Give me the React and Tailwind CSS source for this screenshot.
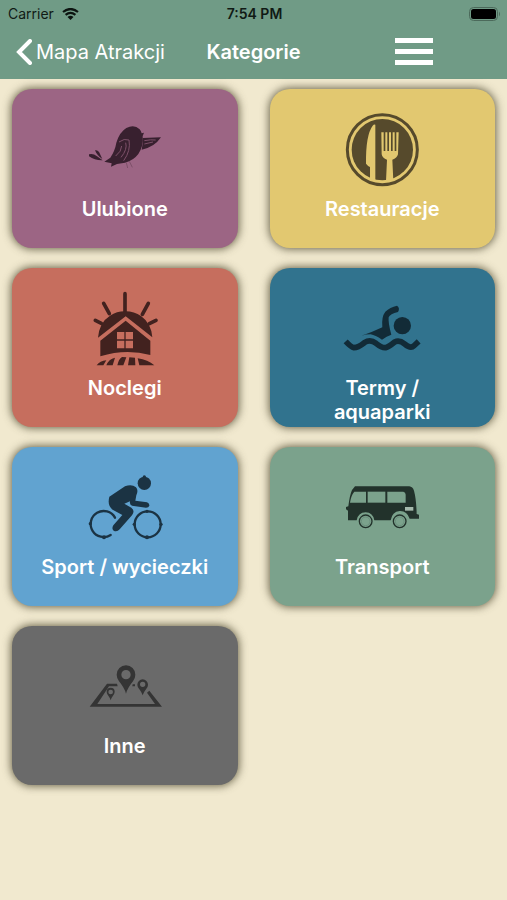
import React from "react";

function BirdIcon() {
  return (
    <svg viewBox="0 -9 300 270" className="h-[90px] w-[100px]" aria-hidden="true">
      <g fill="#38202f">
        <path d="M88 155 L106 143 Q120 122 124 98 Q134 66 154 54 Q178 42 194 58 Q199 64 200 70 L207 68 L203 78 Q206 108 190 132 Q176 151 150 158 L126 162 L108 170 L110 160 Z" />
        <path d="M203 84 L258 82 Q238 112 200 119 Q204 100 203 84 Z" />
        <path d="M42 133 Q54 129 66 139 L83 151 Q60 152 42 139 Z" />
        <path d="M60 121 Q70 119 75 132 L82 147 Q66 137 60 121 Z" />
      </g>
      <g fill="none" stroke="#7d5069" strokeWidth="3">
        <path d="M132 96 Q148 84 162 90 Q168 122 146 152" />
        <path d="M152 98 Q158 118 138 142" />
        <path d="M140 108 Q140 124 122 138" />
        <path d="M208 92 Q228 88 242 90 M208 102 L234 96" />
        <path d="M154 158 L158 174 M163 154 L172 172" />
      </g>
    </svg>
  );
}

function RestaurantIcon() {
  return (
    <svg viewBox="0 6 300 270" className="h-[90px] w-[100px]" aria-hidden="true">
      <circle cx="151" cy="134" r="105" fill="none" stroke="#564a2c" strokeWidth="9" />
      <circle cx="151" cy="134" r="92" fill="#564a2c" />
      <g fill="#e2c870">
        <path d="M130 59 V228 H114 V186 Q108 184 102 176 Q101 90 122 62 Q126 57 130 59 Z" />
        <path d="M148 82 H155 V138 H160 V82 H166 V138 H171 V82 H177 V138 H182 V82 H188 V138 H193 V82 H200 L198 148 Q195 160 181 164 L184 228 H162 L165 164 Q151 160 149 148 Z" />
      </g>
    </svg>
  );
}

function LodgingIcon() {
  return (
    <svg viewBox="-15 3 300 270" className="h-[90px] w-[100px]" aria-hidden="true">
      <g stroke="#42221f" strokeWidth="11" strokeLinecap="round">
        <path d="M135 26 V80 M71 55 L88 86 M205 55 L187 88 M46 106 L64 115 M228 106 L208 116" />
      </g>
      <g fill="#42221f">
        <path d="M54 158 Q58 112 90 92 Q112 78 137 79 Q162 79 184 94 Q214 116 217 157 L137 94 Z" />
        <path d="M61 167 L137 107 L211 167 V210 Q137 190 61 214 Z" />
        <path d="M50 241 Q60 228 79 226 L70 241 Z M79 241 Q86 222 105 218 L98 241 Z M112 241 Q116 222 126 216 L139 217 L130 241 Z M144 241 L148 217 L165 218 L166 241 Z M178 241 L173 220 Q204 225 223 241 Z" />
      </g>
      <path d="M111 141 H133 V163 H111 Z M137 141 H159 V163 H137 Z M111 167 H133 V190 H111 Z M137 167 H159 V190 H137 Z" fill="#c66e5e" />
    </svg>
  );
}

function SwimmerIcon() {
  return (
    <svg viewBox="0 -12 300 270" className="h-[90px] w-[100px]" aria-hidden="true">
      <circle cx="211" cy="107" r="26" fill="#122b37" />
      <path d="M88 137 Q118 128 151 112 Q148 80 160 65 Q174 52 195 47 Q205 54 198 66 Q174 72 170 82 Q168 98 178 134 Q164 138 150 149 Q130 136 116 133 Q102 133 88 137 Z" fill="#122b37" />
      <path d="M41 154 Q57 171 66 173 Q78 173 97 158 Q115 147 132 160 Q149 174 161 173 Q170 171 188 156 Q202 149 218 162 Q236 177 246 167 L260 154" fill="none" stroke="#122b37" strokeWidth="17" />
    </svg>
  );
}

function CyclistIcon() {
  return (
    <svg viewBox="0 0 300 270" className="h-[90px] w-[100px]" aria-hidden="true">
      <g fill="none" stroke="#1b3343" strokeWidth="7">
        <path d="M120 158 A39 39 0 1 0 107 210" strokeLinecap="round" />
        <circle cx="218" cy="178" r="39" />
      </g>
      <g fill="#1b3343">
        <circle cx="208" cy="55" r="20" />
        <circle cx="208" cy="36" r="5" />
        <circle cx="46" cy="176" r="5" />
        <circle cx="87" cy="217" r="6" />
        <circle cx="216" cy="217" r="6" />
        <circle cx="258" cy="178" r="5" />
        <circle cx="178" cy="178" r="5" />
        <circle cx="216" cy="139" r="5" />
        <path d="M103 95 L150 64 Q170 56 183 67 Q191 76 184 91 L181 107 L216 112 Q224 115 223 122 Q221 128 213 128 L171 122 Q163 119 165 109 L148 116 L169 128 Q181 138 171 151 L134 193 Q126 202 116 197 Q109 191 115 181 L142 150 L113 134 Q96 122 103 95 Z" />
      </g>
    </svg>
  );
}

function BusIcon() {
  return (
    <svg viewBox="0 -15 300 270" className="h-[90px] w-[100px]" aria-hidden="true">
      <path d="M69 49 H232 Q242 50 246 62 Q253 88 254 132 L261 134 V146 H233 Q225 122 203 123 Q180 125 176 151 H127 Q123 128 101 127 Q78 128 74 151 H48 V122 L42 118 V111 L49 109 Q53 76 60 60 Z" fill="#22322b" />
      <g fill="#7ba28c">
        <path d="M67 65 H102 V98 H54 Q57 76 67 65 Z" />
        <path d="M107 65 H160 V98 H107 Z" />
        <path d="M166 65 H214 Q221 66 221 74 V98 H166 Z" />
      </g>
      <path d="M219 111 H244 V122 H219 Z" fill="#a5b9ac" />
      <g fill="#7ba28c" stroke="#22322b" strokeWidth="4">
        <circle cx="101" cy="154" r="19" />
        <circle cx="203" cy="154" r="19" />
      </g>
      <g fill="none" stroke="#648775" strokeWidth="2">
        <circle cx="101" cy="154" r="13" />
        <circle cx="203" cy="154" r="13" />
      </g>
    </svg>
  );
}

function MapPinsIcon() {
  return (
    <svg viewBox="0 -18 300 270" className="h-[90px] w-[100px]" aria-hidden="true">
      <path d="M126 101 H96 L44 170 H261 L223 122 L216 128 L240 162 H67 L102 109 H128 Z M173 103 H180 V109 H172 Z" fill="#343434" />
      <g fill="#343434" fillRule="evenodd">
        <path d="M153 131 Q148 113 132 94 Q125 84 125 74 A28 28 0 0 1 181 74 Q181 84 174 94 Q158 113 153 131 Z M153 60 A14 14 0 1 0 153 88 A14 14 0 1 0 153 60 Z" />
        <path d="M203 136 Q200 126 192 116 Q187 110 187 104 A16 16 0 0 1 219 104 Q219 110 214 116 Q206 126 203 136 Z M203 95 A8 8 0 1 0 203 111 A8 8 0 1 0 203 95 Z" />
        <path d="M107 151 Q105 143 98 134 Q95 130 95 125 A12 12 0 0 1 119 125 Q119 130 116 134 Q109 143 107 151 Z M107 119 A7 7 0 1 0 107 133 A7 7 0 1 0 107 119 Z" />
      </g>
    </svg>
  );
}

const categories = [
  { name: "Ulubione", color: "bg-[#9c6584]", Icon: BirdIcon },
  { name: "Restauracje", color: "bg-[#e2c870]", Icon: RestaurantIcon },
  { name: "Noclegi", color: "bg-[#c66e5e]", Icon: LodgingIcon },
  { name: "Termy / aquaparki", color: "bg-[#31738e]", Icon: SwimmerIcon },
  { name: "Sport / wycieczki", color: "bg-[#61a3d0]", Icon: CyclistIcon },
  { name: "Transport", color: "bg-[#7ba28c]", Icon: BusIcon },
  { name: "Inne", color: "bg-[#6a6a6a]", Icon: MapPinsIcon },
];

function StatusBar() {
  return (
    <div className="grid h-7 grid-cols-3 items-center pl-2 pr-1.5 text-sm text-[#101a15]">
      <div className="flex items-center gap-2">
        <span>Carrier</span>
        <svg viewBox="0 0 17 12" className="h-3 w-[17px]" fill="none" stroke="#0c1410" aria-label="Wi-Fi">
          <path d="M1 4 Q8.500 -2 16 4" strokeWidth="2.200" />
          <path d="M3.600 6.800 Q8.500 2.800 13.400 6.800" strokeWidth="2.200" />
          <path d="M8.500 12 L5.500 9 Q8.500 6.600 11.500 9 Z" fill="#0c1410" stroke="none" />
        </svg>
      </div>
      <span className="text-center font-semibold">7:54 PM</span>
      <svg viewBox="0 0 32 14" className="h-[14px] w-8 justify-self-end" aria-label="Battery">
        <rect x="0.500" y="0.500" width="28" height="13" rx="4" fill="none" stroke="#4c6a5b" />
        <rect x="2" y="2" width="25" height="10" rx="2.500" fill="#000" />
        <path d="M30 4.500 Q32 7 30 9.500 Z" fill="#4c6a5b" />
      </svg>
    </div>
  );
}

function NavBar() {
  return (
    <nav className="grid h-[51px] grid-cols-[1fr_auto_1fr] items-center px-4 pb-1 text-xl text-white">
      <button type="button" className="flex items-center gap-1 justify-self-start whitespace-nowrap">
        <svg viewBox="0 0 16 26" className="h-[26px] w-4" fill="none" stroke="#fff" strokeWidth="4" aria-hidden="true">
          <path d="M14 2 L3 13 L14 24" strokeLinecap="round" />
        </svg>
        Mapa Atrakcji
      </button>
      <h1 className="font-semibold">Kategorie</h1>
      <button type="button" aria-label="Menu" className="mr-[58px] flex w-[38px] flex-col gap-1.5 justify-self-end">
        <span className="h-[5px] w-full bg-white" />
        <span className="h-[5px] w-full bg-white" />
        <span className="h-[5px] w-full bg-white" />
      </button>
    </nav>
  );
}

export default function App() {
  return (
    <div className="min-h-screen bg-[#f1e9cf] font-['Inter','Liberation_Sans',sans-serif]">
      <header className="bg-[#709b86]">
        <StatusBar />
        <NavBar />
      </header>
      <main className="grid grid-cols-2 gap-x-8 gap-y-5 px-3 pt-[10px] pb-5">
        {categories.map(({ name, color, Icon }) => (
          <button
            key={name}
            type="button"
            className={`flex min-h-[159px] flex-col items-center rounded-[20px] px-7 pt-[18px] text-xl leading-6 font-semibold text-white shadow-[0_0_9px_1px_rgba(70,65,40,0.8)] ${color}`}
          >
            <Icon />
            <span>{name}</span>
          </button>
        ))}
      </main>
    </div>
  );
}
